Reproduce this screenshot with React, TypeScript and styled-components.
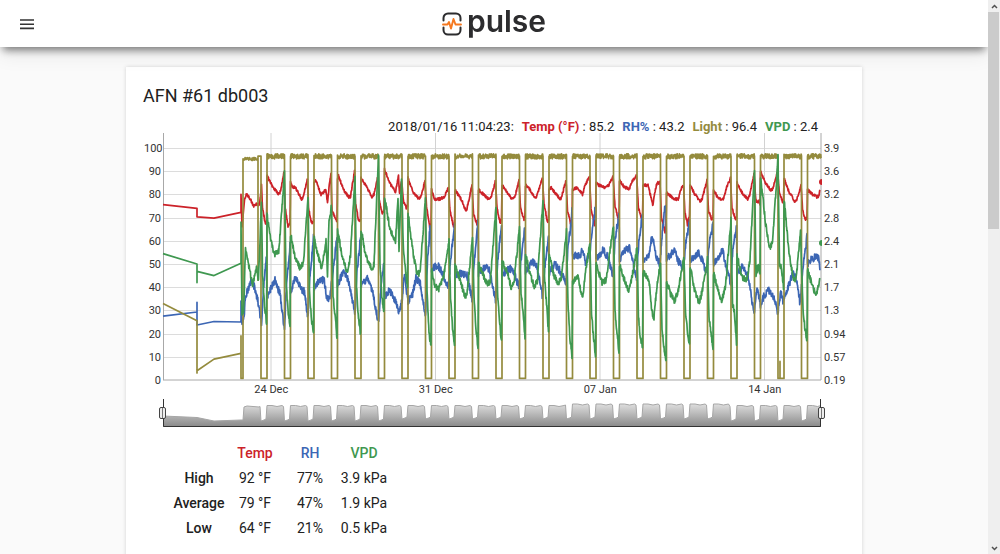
import React, { useState } from 'react';
import styled, { createGlobalStyle } from 'styled-components';

const RED = '#cc2229';
const BLUE = '#3c66b4';
const GREEN = '#3f9850';
const OLIVE = '#948b3d';

type Point = [number, number];

const PLOT_W = 658;
const PLOT_H = 248;
const BASE_Y = 247;
const DAY = 23.5;
const FIRST_NIGHT = 98;
const NIGHT = 6;

/* Readings of each day as [hours offset in plot units, value]. */
const temp: Point[][] = [
  [[1, 78], [3, 80], [7, 78], [10, 75], [14, 76], [16, 75], [18, 84], [19, 74], [22, 67], [23, 68]],
  [[0, 88], [6, 83], [12, 80], [14, 82], [17, 90], [18, 75], [21, 66], [23, 68]],
  [[0, 85], [2, 83], [5, 83], [11, 78], [13, 79], [17, 87], [18, 74], [21, 68], [23, 68]],
  [[0, 85], [2, 86], [7, 80], [12, 82], [13.5, 76], [15, 83], [17, 89], [18, 73], [22, 69], [23, 68]],
  [[0, 87], [1, 88], [6, 82], [11, 79], [13, 79], [17, 90], [18, 76], [21, 69], [23, 69]],
  [[0, 87], [6, 83], [11, 79], [13, 80], [17, 88], [18, 78], [21, 72], [23, 73]],
  [[0, 91], [5, 85], [11, 81], [14, 88], [15, 80], [17, 86], [19, 77], [22, 74], [23, 75]],
  [[0, 87], [5, 81], [11, 78], [13, 79], [17, 86], [18.5, 75], [22, 65], [23, 66]],
  [[0, 82], [3, 78], [8, 78], [13, 79], [17, 83], [18.5, 73], [22, 66], [23, 67]],
  [[0, 82], [6, 78], [11, 73], [12, 74], [17, 84], [18.5, 72], [22, 67], [23, 67]],
  [[0, 82], [5, 80], [10, 78], [13, 79], [17, 86], [18.5, 74], [22, 67], [23, 70]],
  [[0, 84], [5, 81], [10, 78], [13, 79], [17, 86], [18.5, 74], [22, 69], [23, 71]],
  [[0, 84], [3, 83], [9, 79], [11, 79], [17, 87], [18.5, 76], [22, 68], [23, 69]],
  [[0, 82], [2, 83], [9, 79], [12, 78], [17, 86], [18.5, 73], [22, 67], [23, 69]],
  [[0, 82], [5, 83], [10, 80], [12, 83], [17, 88], [18.5, 74], [22, 67], [23, 69]],
  [[0, 85], [3, 84], [8, 83], [13, 84], [17, 88], [19, 75], [22, 70], [23, 69]],
  [[0, 86], [5, 83], [10, 82.5], [13, 86], [17, 88], [19, 74], [22, 70], [23, 70]],
  [[0, 84], [5, 84], [10, 75], [11, 79], [14, 85], [17, 85], [18.5, 70], [22, 64], [23, 66]],
  [[0, 81], [7, 78], [12, 78], [14, 82], [17, 84], [18.5, 72], [21, 67], [23, 71]],
  [[0, 84], [5, 80], [10, 77], [12, 78], [17, 86], [18.5, 73], [22, 69], [23, 70]],
  [[0, 82], [5, 78], [10, 78], [13, 83], [17, 87], [18.5, 74], [22, 69], [23, 70]],
  [[0, 85], [6, 80], [11, 78], [13, 80], [17, 89], [19, 77], [22, 77], [23, 76]],
  [[0, 90], [5, 85], [10, 82], [12, 82], [17, 90], [19, 80], [22, 77], [23, 77]],
  [[0, 87], [5, 81], [11, 77], [13, 78], [17, 84], [18.5, 74], [21, 69], [23, 70]],
  [[0, 82], [5, 80], [9, 79], [11, 79], [14, 85]],
];

const rh: Point[][] = [
  [[0, 25], [2, 36], [8, 43], [11, 40], [14, 35], [18, 24], [20, 40], [23, 53]],
  [[0, 36], [2, 38], [8, 43], [13, 37], [17.5, 22], [19, 38], [23, 58]],
  [[0, 38], [5, 44], [11, 39], [14, 38], [17.5, 27], [19, 42], [23, 62]],
  [[0, 40], [5, 43], [10, 43], [13, 35], [16, 36], [17.5, 42], [20, 50], [23, 62]],
  [[0, 41], [6, 47], [11, 43], [17.5, 28], [19, 44], [23, 62]],
  [[0, 40], [6, 44], [11, 39], [17.5, 25], [20, 40], [23, 50]],
  [[0, 36], [5, 39], [11, 34], [15, 29], [17.5, 34], [20, 46], [23, 35]],
  [[0, 34], [4, 36], [8, 44], [12, 42], [17.5, 27], [19, 48], [22, 66], [23, 60]],
  [[0, 46], [3, 49], [7, 49], [12, 45], [17, 40], [19, 52], [23, 67]],
  [[0, 45], [7, 46], [12, 45], [17, 35], [19, 50], [23, 69]],
  [[0, 46], [7, 49], [11, 47], [17, 34], [19, 50], [23, 67]],
  [[0, 46], [5, 47], [8, 48], [12, 46], [17, 40], [19, 52], [23, 66]],
  [[0, 47], [7, 51], [11, 50], [17, 36], [19, 48], [23, 61]],
  [[0, 46], [6, 50], [11, 47], [17, 42], [19, 58], [22, 67], [23, 75]],
  [[0, 53], [4, 54], [8, 53], [10, 57], [13, 51], [17, 54], [19, 62], [23, 75]],
  [[0, 52], [7, 56], [12, 53], [17, 45], [19, 60], [23, 72]],
  [[0, 52], [5, 56], [10, 57], [13, 51], [17, 44], [19, 58], [23, 72]],
  [[0, 52], [6, 53], [8, 61], [11, 59], [13, 53], [17, 50], [19, 62], [22, 75], [23, 74]],
  [[0, 52], [8, 56], [12, 51], [17, 48], [19, 58], [23, 69]],
  [[0, 51], [8, 55], [12, 52], [17, 45], [19, 58], [23, 67]],
  [[0, 50], [9, 56], [12, 50], [17, 42], [19, 54], [23, 67]],
  [[0, 46], [6, 49], [11, 45], [17, 29], [20, 40], [23, 34]],
  [[0, 32], [3, 36], [8, 39], [13, 36], [17.5, 29], [20, 38], [23, 33]],
  [[0, 35], [5, 41], [9, 46], [13, 43], [16, 33], [19, 48], [23, 62]],
  [[0, 50], [3, 52], [8, 53], [11, 53], [13, 46], [14, 42]],
];

const vpd: Point[][] = [
  [[0, 28], [2, 57], [9, 41], [13, 48], [15, 43], [18, 77], [19, 45], [21, 32], [23, 25]],
  [[0, 72], [3, 62], [7, 54], [12, 56], [17.5, 90], [19, 42], [21, 30], [23, 23]],
  [[0, 63], [5, 52], [10, 48], [13, 51], [17.5, 79], [19, 38], [21, 26], [23, 20]],
  [[0, 62], [3, 55], [8, 48], [12, 60], [13.5, 45], [15, 68], [17.5, 75], [19, 37], [21, 28], [23, 18]],
  [[0, 65], [5, 52], [10, 46], [13, 54], [17.5, 88], [19, 40], [21, 27], [23, 20]],
  [[0, 65], [5, 53], [11, 48], [13, 50], [17.5, 97], [19, 50], [21, 35], [23, 30]],
  [[0, 79], [5, 66], [11, 59], [13.5, 79], [14.5, 56], [17, 87], [19, 55], [23, 40]],
  [[0, 72], [5, 55], [9, 46], [12, 46], [17.5, 78], [19, 38], [21, 20], [23, 15]],
  [[0, 48], [3, 41], [7, 39], [12, 44], [17.5, 60], [19, 36], [21, 23], [23, 15]],
  [[0, 50], [5, 43], [10, 36], [12, 37], [17.5, 62], [19, 36], [21, 22], [23, 14]],
  [[0, 50], [5, 45], [9, 41], [12, 43], [17.5, 75], [19, 38], [21, 25], [23, 16]],
  [[0, 51], [5, 47], [9, 40], [12, 42], [17.5, 66], [19, 37], [21, 30], [23, 18]],
  [[0, 54], [5, 45], [9, 40], [12, 43], [17.5, 78], [19, 44], [21, 33], [23, 20]],
  [[0, 54], [5, 45], [9, 42], [12, 43], [17.5, 64], [19, 32], [21, 18], [23, 10]],
  [[0, 42], [5, 45], [10, 35], [13, 47], [17.5, 59], [19, 29], [21, 18], [23, 11]],
  [[0, 50], [6, 42], [10, 43], [17.5, 67], [19, 30], [21, 20], [23, 12]],
  [[0, 50], [5, 43], [9, 38], [12, 43], [17.5, 57], [19, 27], [21, 18], [23, 14]],
  [[0, 47], [6, 43], [9, 29], [11, 27], [14, 41], [17.5, 50], [19, 22], [21, 14], [23, 9]],
  [[0, 43], [4, 37], [8, 34], [12, 39], [17.5, 53], [19, 29], [21, 21], [23, 15]],
  [[0, 49], [5, 38], [9, 33], [12, 38], [17.5, 52], [19, 27], [21, 20], [23, 14]],
  [[0, 46], [5, 38], [8, 34], [12, 40], [17.5, 69], [19, 33], [21, 29], [23, 16]],
  [[0, 54], [5, 44], [10, 43], [13, 52], [17.5, 90], [19, 44], [21, 50], [23, 46]],
  [[0, 88], [5, 68], [9, 57], [12, 59], [17.5, 96], [19, 50], [21, 48], [23, 40]],
  [[0, 78], [5, 55], [9, 44], [12, 43], [16.5, 64], [19, 30], [21, 22], [23, 17]],
  [[0, 48], [5, 40], [9, 37], [12, 43], [14, 58]],
];

const noise = (n: number) => {
  const s = Math.sin(n * 127.1 + 11.7) * 43758.5453;
  return (s - Math.floor(s)) * 2 - 1;
};

const toY = (v: number) => BASE_Y - v * 2.32;

const toPath = (points: Point[]) =>
  points.map(([x, v], i) => `${i ? 'L' : 'M'}${x.toFixed(1)} ${toY(v).toFixed(1)}`).join('');

const trace = (lead: Point[], days: Point[][], jitter: number) => {
  const keys: Point[] = [];
  days.forEach((day, i) => {
    const start = FIRST_NIGHT + NIGHT + (i - 1) * DAY;
    day.forEach(([t, v]) => keys.push([start + t, v]));
  });
  const out = [...lead];
  for (let k = 0; k < keys.length - 1; k++) {
    const [x0, v0] = keys[k];
    const [x1, v1] = keys[k + 1];
    const steps = Math.max(1, Math.round((x1 - x0) / 0.3));
    for (let s = 0; s < steps; s++) {
      const x = x0 + ((x1 - x0) * s) / steps;
      if (x > PLOT_W - 1) break;
      out.push([x, v0 + ((v1 - v0) * s) / steps + noise(x * 3 + k) * jitter]);
    }
  }
  return toPath(out);
};

const tempPath = trace([[0, 75.6], [34, 74], [34, 70.3], [51, 69.8], [78, 72.3], [78, 80], [79, 66]], temp, 0.6);
const rhPath = trace([[0, 27.5], [34, 29.3], [34, 33.5], [34, 23.7], [51, 25.2], [78, 25], [78, 34], [79, 24]], rh, 1.6);
const vpdPath = trace([[0, 54.5], [34, 50], [34, 42], [34, 46.8], [51, 45], [78, 50.3], [78, 68], [79, 28]], vpd, 1.3);

const lightPoints = (() => {
  const out: Point[] = [[0, 33], [34, 25.5], [34, 3], [34, 4], [51, 9], [78, 11.5], [78, 19], [78, 0.7], [80, 0.7], [80, 95.3]];
  for (let x = 80; x < 95; x += 0.3) out.push([x, 95.3 + noise(x) * 0.6]);
  out.push([95, 43], [95, 96.5]);
  for (let i = 0; i < 24; i++) {
    const off = FIRST_NIGHT + i * DAY;
    const on = off + NIGHT;
    out.push([off, 96.5], [off, 0.7]);
    if (i === 22) out.push([off + 2, 0.7], [off + 2, 8], [off + 2, 0.7]);
    else out.push([off + 2, 0.7]);
    out.push([on, 0.7], [on, 96.4]);
    for (let x = on; x < Math.min(on + DAY - NIGHT, PLOT_W); x += 0.3) out.push([x, 96.4 + noise(x) * 1.1]);
  }
  return out;
})();

const overviewTop = (() => {
  const out: Point[] = [[0, 17], [34, 18.5], [51, 22], [78, 21], [80, 21], [81, 8], [84, 7], [96, 8]];
  for (let i = 0; i < 24; i++) {
    const off = FIRST_NIGHT + i * DAY;
    const on = off + NIGHT;
    const late = i > 12 && i < 20;
    const low = i < 6 || i > 19 ? 21 : 19;
    const high = late ? 5 : 6.5;
    out.push([off - 1, high + 1], [off, low + 1], [off + 3, low], [on - 1, low - 1], [on, high], [on + 5, high], [on + 10, high + 1], [Math.min(on + 15, PLOT_W), high]);
  }
  return out.map(([x, y], i) => `${i ? 'L' : 'M'}${x} ${y}`).join('');
})();

const GlobalStyle = createGlobalStyle`
  * { box-sizing: border-box; }
  body { margin: 0; background: #fafafa; color: #212121; font-family: Roboto, "Liberation Sans", sans-serif; font-size: 14px; }
`;

const Shell = styled.div`
  display: flex;
  height: 100vh;
`;

const Page = styled.div`
  flex: 1;
  min-width: 0;
  overflow: hidden auto;
  scrollbar-width: none;
`;

const Header = styled.header`
  position: sticky;
  top: 0;
  z-index: 2;
  display: grid;
  grid-template-columns: 1fr auto 1fr;
  align-items: center;
  height: 47px;
  padding: 0 14px;
  background: #fff;
  box-shadow: 0 6px 8px -3px rgba(0, 0, 0, 0.5), 0 8px 20px rgba(0, 0, 0, 0.08);
`;

const MenuButton = styled.button`
  display: flex;
  width: 26px;
  height: 24px;
  padding: 6px;
  border: 0;
  background: none;
`;

const Brand = styled.a`
  display: flex;
  align-items: center;
  gap: 5px;
  color: #2c2c2e;
  font: 600 30px/40px Inter, sans-serif;
  text-decoration: none;
`;

const BrandName = styled.span`
  padding-bottom: 5px;
`;

const Card = styled.main`
  width: calc(100% - 32px);
  max-width: 736px;
  min-height: 640px;
  margin: 20px auto;
  padding: 17px;
  background: #fff;
  box-shadow: 0 0 4px rgba(0, 0, 0, 0.16);
`;

const Title = styled.h1`
  margin: 0;
  font-size: 18px;
  font-weight: 400;
  line-height: 24px;
`;

const Legend = styled.p`
  display: flex;
  justify-content: flex-end;
  gap: 8px;
  margin: 11px 27px 0 0;
  font-size: 13px;
  line-height: 16px;
  white-space: nowrap;
`;

const Series = styled.b<{ $color: string }>`
  color: ${(p) => p.$color};
  font-weight: 700;
`;

const ChartGrid = styled.div`
  display: grid;
  grid-template-columns: 20px minmax(0, 1fr) 24px;
  margin-top: -2px;
`;

const AxisLabels = styled.div<{ $side: 'left' | 'right' }>`
  display: flex;
  flex-direction: column;
  justify-content: space-between;
  height: 246px;
  margin-top: 9px;
  padding: ${(p) => (p.$side === 'right' ? '0 0 0 3px' : '0 2px 0 1px')};
  text-align: ${(p) => (p.$side === 'left' ? 'right' : 'left')};
  color: #333;
  font-size: 11px;
  line-height: 14px;
`;

const Plot = styled.svg`
  display: block;
  width: 100%;
  height: 248px;
  overflow: visible;
`;

const DateAxis = styled.div`
  display: grid;
  grid-column: 2;
  grid-template-columns: repeat(4, 1fr);
  margin: -5px -26px 0 26px;
  color: #333;
  font-size: 11px;
  line-height: 14px;
  text-align: center;
`;

const RangeSelector = styled.div`
  position: relative;
  grid-column: 2;
  height: 29px;
  margin-top: 2px;
`;

const Overview = styled.svg`
  display: block;
  width: 100%;
  height: 29px;
`;

const RangeInput = styled.input`
  position: absolute;
  top: 0;
  left: -4px;
  width: calc(100% + 8px);
  height: 28px;
  margin: 0;
  appearance: none;
  background: none;
  pointer-events: none;

  &::-webkit-slider-thumb {
    appearance: none;
    width: 7px;
    height: 12px;
    border: 1px solid #444;
    border-radius: 2px;
    background: linear-gradient(90deg, #eee 2px, #777 2px, #777 3px, #eee 3px);
    pointer-events: auto;
  }
`;

const Stats = styled.table`
  width: 220px;
  margin: 13px 0 0 25px;
  border-collapse: collapse;
  table-layout: fixed;
  line-height: 17px;
  text-align: center;
  white-space: nowrap;
`;

const StatCell = styled.td`
  padding: 4px 0;
`;

const StatHead = styled.th<{ $color?: string }>`
  padding: 4px 0;
  color: ${(p) => p.$color ?? 'inherit'};
  font-weight: 500;
`;

const Scrollbar = styled.div`
  display: flex;
  flex-direction: column;
  width: 12px;
  background: #efefef;
`;

const ScrollButton = styled.button`
  display: flex;
  align-items: center;
  justify-content: center;
  height: 12px;
  padding: 0;
  border: 0;
  background: none;
`;

const ScrollTrack = styled.div`
  flex: 1;
`;

const ScrollThumb = styled.div`
  width: 11px;
  height: 41%;
  background: #cbcbcb;
`;

const legend = [
  { name: 'Temp (°F)', value: '85.2', color: RED },
  { name: 'RH%', value: '43.2', color: BLUE },
  { name: 'Light', value: '96.4', color: OLIVE },
  { name: 'VPD', value: '2.4', color: GREEN },
];

const leftTicks = ['100', '90', '80', '70', '60', '50', '40', '30', '20', '10', '0'];
const rightTicks = ['3.9', '3.6', '3.2', '2.8', '2.4', '2.1', '1.7', '1.3', '0.94', '0.57', '0.19'];
const dates = ['24 Dec', '31 Dec', '07 Jan', '14 Jan'];
const rows = [
  ['High', '92 °F', '77%', '3.9 kPa'],
  ['Average', '79 °F', '47%', '1.9 kPa'],
  ['Low', '64 °F', '21%', '0.5 kPa'],
];

function ReadingsPlot() {
  return (
    <Plot viewBox={`0 0 ${PLOT_W} ${PLOT_H}`} preserveAspectRatio="none" role="img" aria-label="Temperature, humidity, light and VPD over time">
      {leftTicks.slice(0, -1).map((t) => (
        <line key={t} x1="0" x2={PLOT_W} y1={Math.round(toY(+t)) + 0.5} y2={Math.round(toY(+t)) + 0.5} stroke="#dcdcdc" />
      ))}
      {dates.map((d, i) => (
        <line key={d} x1={108 + i * 164.5} x2={108 + i * 164.5} y1="0" y2={BASE_Y} stroke="#d2d2d2" />
      ))}
      <path d={`M0.5 0V${BASE_Y}M${PLOT_W} 0V${BASE_Y}`} stroke="#a8a8a8" fill="none" />
      <g fill="none" strokeLinejoin="round" strokeWidth="1.7">
        <path d={tempPath} stroke={RED} />
        <path d={rhPath} stroke={BLUE} />
        <path d={toPath(lightPoints)} stroke={OLIVE} />
        <path d={vpdPath} stroke={GREEN} />
      </g>
      <path d={`M0 ${BASE_Y}H${PLOT_W}`} stroke="#a8a8a8" />
      <path d="M659 46a3 3 0 0 0 0 6z" fill={RED} />
      <path d="M659 107a3 3 0 0 0 0 6z" fill={GREEN} />
    </Plot>
  );
}

export default function App() {
  const [from, setFrom] = useState(0);
  const [to, setTo] = useState(100);

  return (
    <Shell>
      <GlobalStyle />
      <Page>
        <Header>
          <MenuButton aria-label="Open menu">
            <svg width="14" height="12" viewBox="0 0 14 12" fill="none" stroke="#333" strokeWidth="1.6">
              <path d="M0 2h14M0 6.200h14M0 10.400h14" />
            </svg>
          </MenuButton>
          <Brand href="#">
            <svg width="20" height="24" viewBox="0 0 20 24" fill="none" strokeLinecap="round" strokeLinejoin="round">
              <path d="M1.500 8.500V6a4.500 4.500 0 0 1 4.500-4.500h8a4.500 4.500 0 0 1 4.500 4.500v2.500M1.500 15.500v2.500a4.500 4.500 0 0 0 4.500 4.500h8a4.500 4.500 0 0 0 4.500-4.500v-2.500" stroke="#2c2c2e" strokeWidth="2" />
              <path d="M1 12.500h4.500l1.500-2.500 2 6.500 2.500-9.500 2 5.500h5.500" stroke="#f5781f" strokeWidth="1.900" />
            </svg>
            <BrandName>pulse</BrandName>
          </Brand>
        </Header>
        <Card>
          <Title>AFN #61 db003</Title>
          <Legend>
            <span>2018/01/16 11:04:23:</span>
            {legend.map((s) => (
              <span key={s.name}>
                <Series $color={s.color}>{s.name}</Series> : {s.value}
              </span>
            ))}
          </Legend>
          <ChartGrid>
            <AxisLabels $side="left">{leftTicks.map((t) => <span key={t}>{t}</span>)}</AxisLabels>
            <ReadingsPlot />
            <AxisLabels $side="right">{rightTicks.map((t) => <span key={t}>{t}</span>)}</AxisLabels>
            <DateAxis>{dates.map((d) => <span key={d}>{d}</span>)}</DateAxis>
            <RangeSelector>
              <Overview viewBox="0 0 658 29" preserveAspectRatio="none" aria-hidden="true">
                <defs>
                  <linearGradient id="overview" x1="0" y1="0" x2="0" y2="1">
                    <stop offset="0" stopColor="#dedede" />
                    <stop offset="1" stopColor="#888" />
                  </linearGradient>
                </defs>
                <path d={`${overviewTop}L658 28H0z`} fill="url(#overview)" />
                <path d={overviewTop} fill="none" stroke="#a6a6a6" />
                <path d="M0.500 0V27.500H657.500V0" fill="none" stroke="#333" />
              </Overview>
              <RangeInput type="range" aria-label="Range start" value={from} onChange={(e) => setFrom(+e.target.value)} />
              <RangeInput type="range" aria-label="Range end" value={to} onChange={(e) => setTo(+e.target.value)} />
            </RangeSelector>
          </ChartGrid>
          <Stats>
            <colgroup>
              <col width="62" />
              <col width="50" />
              <col width="60" />
              <col width="48" />
            </colgroup>
            <thead>
              <tr>
                <StatCell />
                <StatHead scope="col" $color={RED}>Temp</StatHead>
                <StatHead scope="col" $color={BLUE}>RH</StatHead>
                <StatHead scope="col" $color={GREEN}>VPD</StatHead>
              </tr>
            </thead>
            <tbody>
              {rows.map(([label, ...values]) => (
                <tr key={label}>
                  <StatHead scope="row">{label}</StatHead>
                  {values.map((v) => <StatCell key={v}>{v}</StatCell>)}
                </tr>
              ))}
            </tbody>
          </Stats>
        </Card>
      </Page>
      <Scrollbar>
        <ScrollButton aria-label="Scroll up">
          <svg width="7" height="5" viewBox="0 0 7 5" fill="none" stroke="#505050" strokeWidth="1.500"><path d="M1 4l2.500-2.500L6 4" /></svg>
        </ScrollButton>
        <ScrollTrack><ScrollThumb /></ScrollTrack>
        <ScrollButton aria-label="Scroll down">
          <svg width="7" height="5" viewBox="0 0 7 5" fill="none" stroke="#505050" strokeWidth="1.500"><path d="M1 1l2.500 2.500L6 1" /></svg>
        </ScrollButton>
      </Scrollbar>
    </Shell>
  );
}
